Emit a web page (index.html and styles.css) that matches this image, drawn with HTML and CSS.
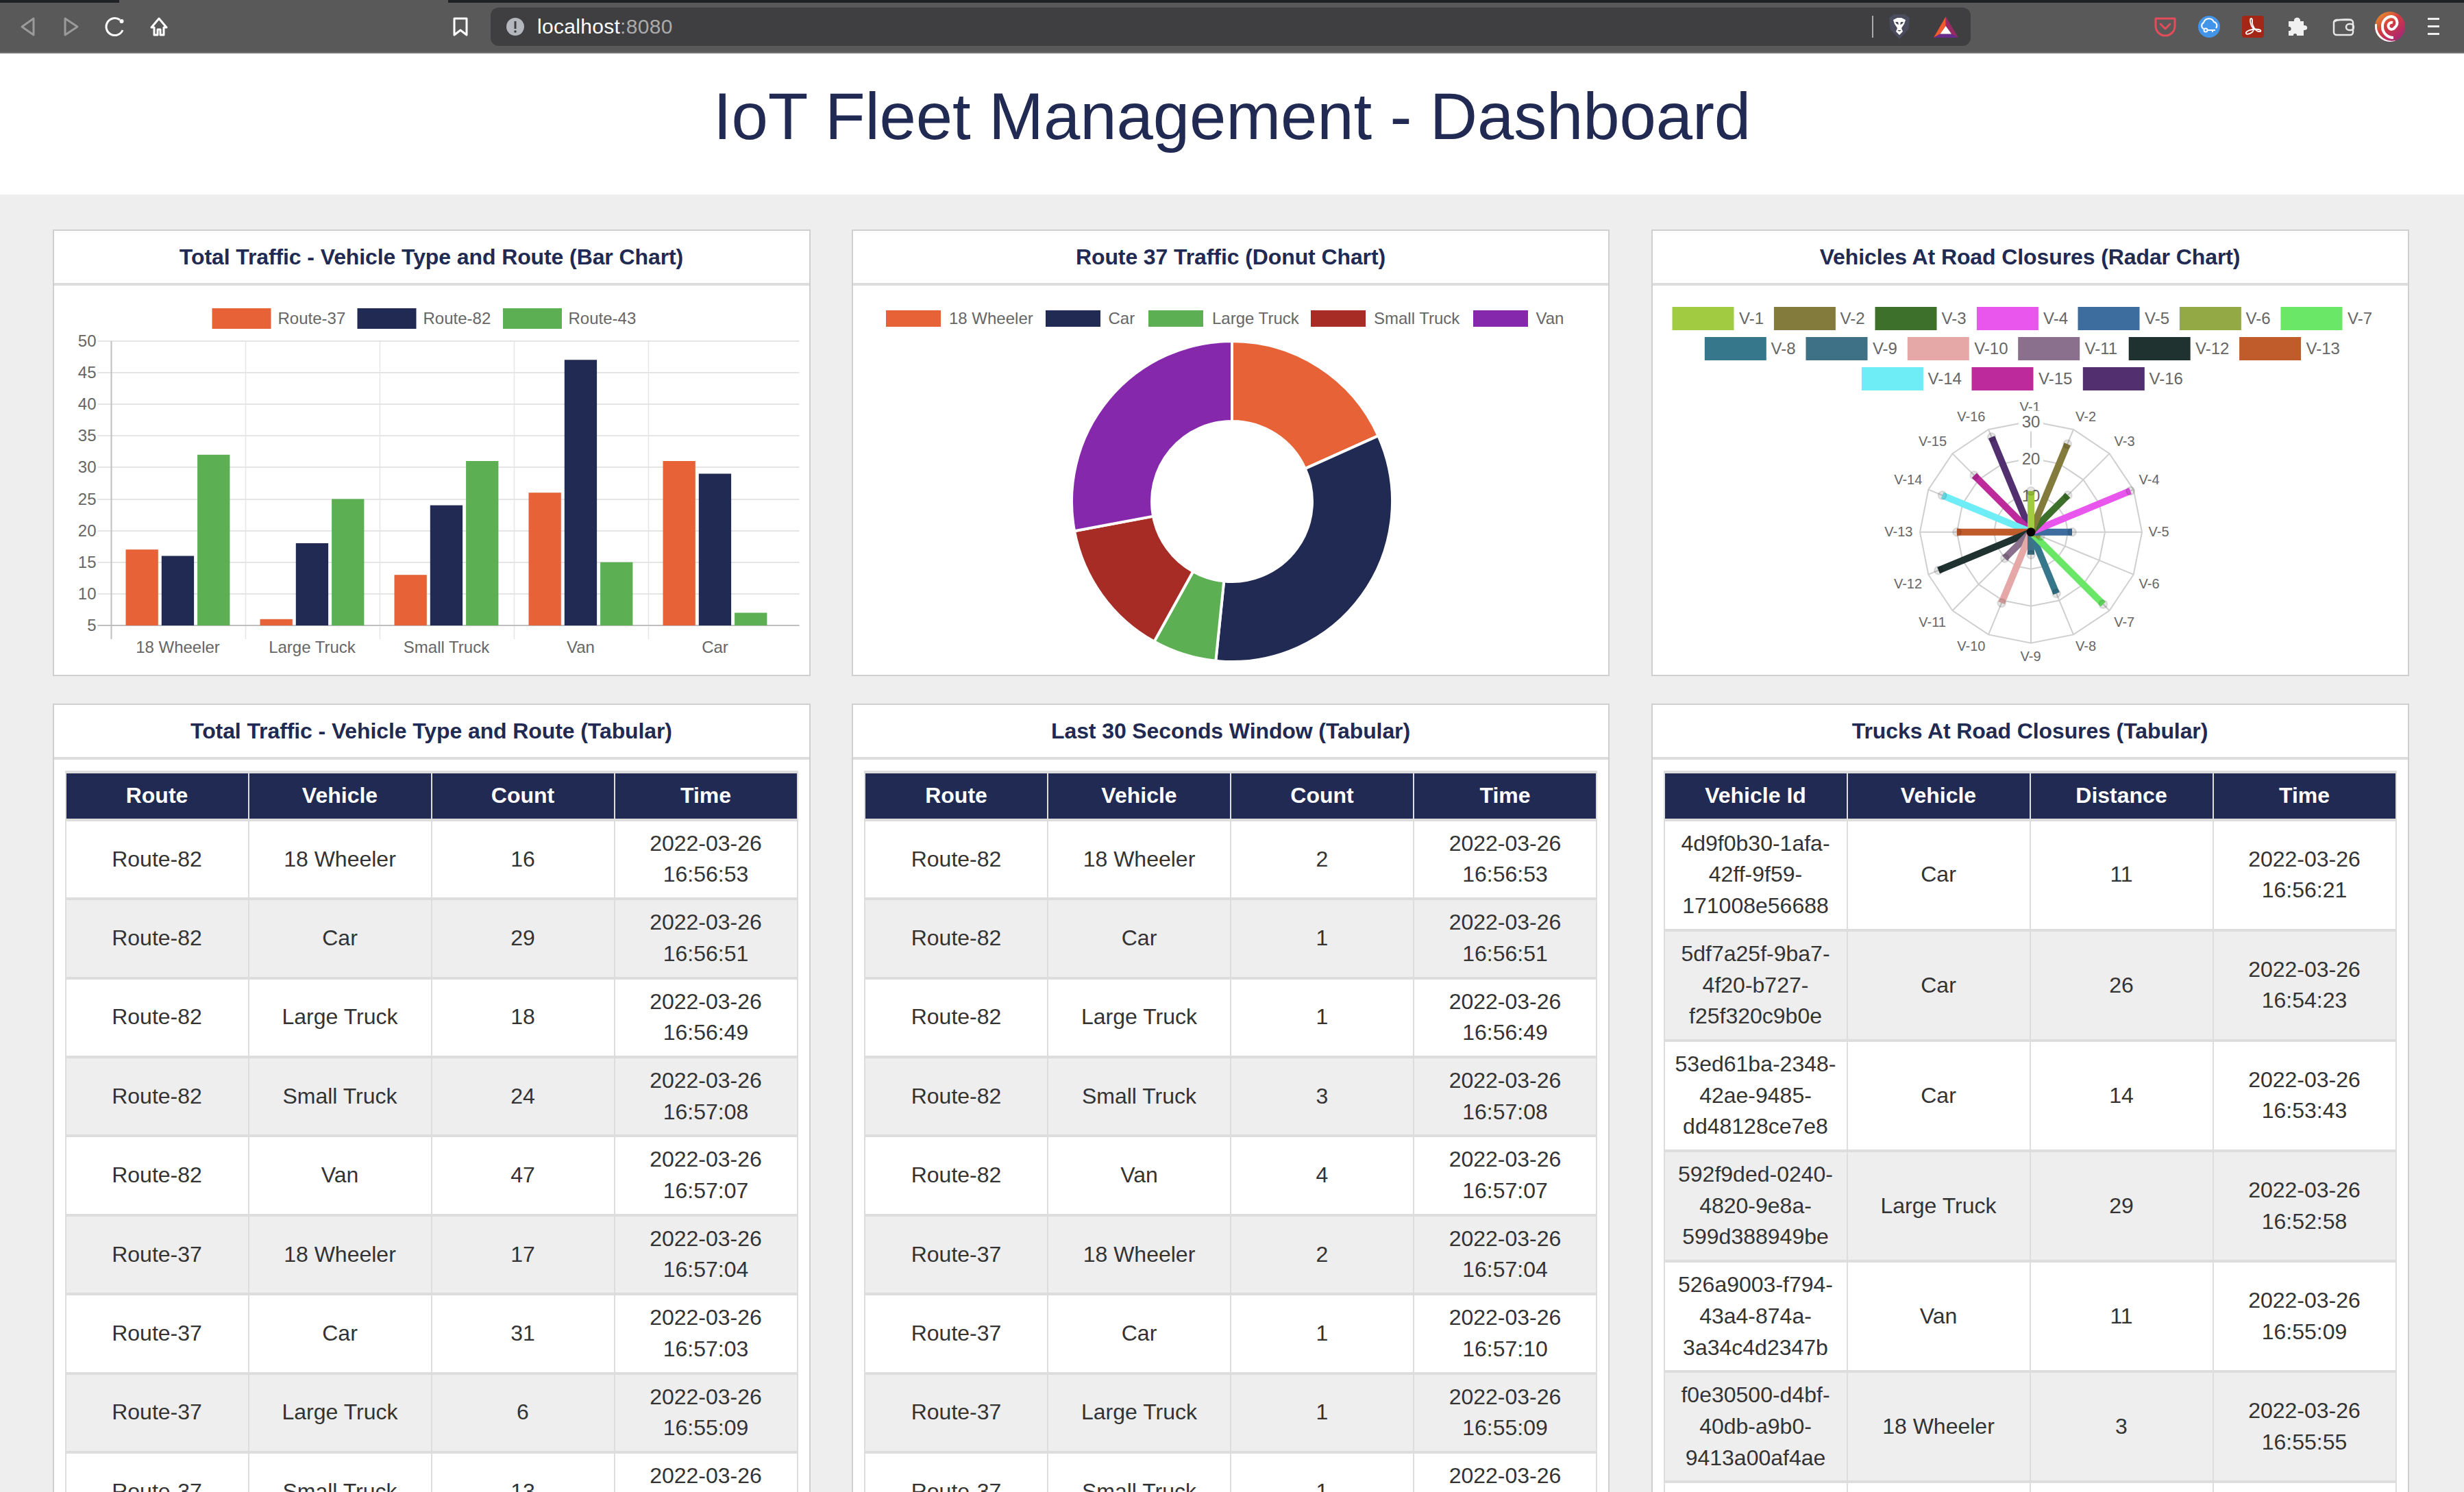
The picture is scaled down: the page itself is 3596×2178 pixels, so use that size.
FILE: index.html
```html
<!DOCTYPE html>
<html lang="en">
<head>
  <meta charset="UTF-8">
  <title>IoT Fleet Management - Dashboard</title>
  <link rel="stylesheet" href="styles.css">
</head>
<body>
  <div class="tabstrip"><span class="tab-active"></span></div>
  <div class="toolbar">
    <svg class="tool" viewBox="0 0 64 64"><path class="ic-off" d="M41 20 24 32 41 44Z"/></svg>
    <svg class="tool" viewBox="0 0 64 64"><path class="ic-off" d="M23 20 41 32 23 44Z"/></svg>
    <svg class="tool" viewBox="0 0 64 64"><path class="ic-on" d="M43 37A12.500 12.500 0 1 1 39 22"/><circle cx="41.500" cy="24" r="3" fill="#fff"/></svg>
    <svg class="tool" viewBox="0 0 64 64"><path class="ic-on" d="M32 20 21 33H25V44H30V36H34V44H39V33H43Z"/></svg>
    <svg class="tool tool-mark" viewBox="0 0 64 64"><path class="ic-on" d="M23 20H41V44L32 37 23 44Z"/></svg>
    <div class="urlbar">
      <svg class="url-info" viewBox="0 0 32 32"><circle cx="16" cy="16" r="13" fill="#b4b8be"/><rect x="14.500" y="8" width="3" height="11" fill="#3f3e41"/><circle cx="16" cy="23" r="1.800" fill="#3f3e41"/></svg>
      <span class="url-text">localhost<span class="url-port">:8080</span></span>
      <span class="url-sep"></span>
      <svg class="url-shield" viewBox="0 0 30 36">
        <path fill="#4b4d5f" d="M7 0H23L30 5 28 22 15 36 2 22 0 5Z"/>
        <path fill="#fff" d="M6 8 12 5H18L24 8 22 14 18 20 20 25 15 30 10 25 12 20 8 14Z"/>
        <path fill="#4b4d5f" d="M9 11H13L14 15 11 14ZM21 11H17L16 15 19 14ZM12 23H18L15 25Z"/>
      </svg>
      <svg class="url-bat" viewBox="0 0 36 31">
        <path fill="#f2592f" d="M17.700 0 0 31 9.500 25.600 17.700 14Z"/>
        <path fill="#9a2a66" d="M17.700 0 36 31 26 25.600 17.700 14Z"/>
        <path fill="#672c8e" d="M0 31H36L26 25.600H9.500Z"/>
        <path fill="#fff" d="M17.700 14 26 25.600H9.500Z"/>
      </svg>
    </div>
    <div class="extensions">
      <svg class="tool" viewBox="0 0 64 64"><path fill="none" stroke="#e34d5b" stroke-width="3" stroke-linejoin="round" stroke-linecap="round" d="M18 20H46V31A14 14 0 0 1 18 31ZM25 28 32 35 39 28"/></svg>
      <svg class="tool" viewBox="0 0 64 64"><circle cx="32" cy="32" r="16" fill="#4295e8"/><path fill="none" stroke="#fff" stroke-width="2" d="M24 35A5 5 0 0 1 24 26 8 8 0 0 1 39 25 5.500 5.500 0 0 1 42 34M30 37H41M37 37V40"/><circle cx="27" cy="37" r="2.500" fill="none" stroke="#fff" stroke-width="2"/></svg>
      <svg class="tool" viewBox="0 0 64 64"><rect x="16" y="16" width="32" height="32" rx="4" fill="#a32616"/><path fill="none" stroke="#fff" stroke-width="1.800" d="M29 20C27 21 28 29 32 34 36 39 24 45 22 42 20 39 31 34 40 36 45 37 44 40 40 39 35 38 30 29 31 23 31 21 30 20 29 20Z"/></svg>
      <svg class="tool" viewBox="0 0 64 64"><path fill="#f0f0f0" d="M20 24H28C27 17 38 17 37 24H42V30C49 29 49 38 42 37V45H32C33 41 26 41 27 45H20V38C25 39 25 31 20 32Z"/></svg>
      <svg class="tool tool-gap" viewBox="0 0 64 64"><g fill="none" stroke="#e8e8e8" stroke-width="2.500"><rect x="18" y="22" width="28" height="22" rx="4"/><path d="M19 25C21 21 40 21 44 22"/><rect x="36" y="28" width="11" height="9" rx="4.500"/></g></svg>
      <svg class="tool tool-gap" viewBox="0 0 64 64">
        <defs>
          <linearGradient id="swirl" x1="0.100" y1="0" x2="0.900" y2="1"><stop offset="0" stop-color="#e89a2e"/><stop offset="0.450" stop-color="#d3393f"/><stop offset="1" stop-color="#9c2482"/></linearGradient>
          <clipPath id="swirl-clip"><circle cx="32" cy="32" r="22"/></clipPath>
        </defs>
        <circle cx="32" cy="32" r="22" fill="url(#swirl)"/>
        <g clip-path="url(#swirl-clip)" fill="none" stroke="#fff">
          <path stroke-width="4" d="M36 26A5 5 0 1 0 39 33 A9 9 0 0 0 34 17 A14 14 0 0 0 21 32 A16 16 0 0 0 37 48"/>
          <path stroke-width="4" d="M11 28A24 24 0 0 0 40 54M10 38A26 26 0 0 0 28 55"/>
        </g>
      </svg>
      <svg class="tool" viewBox="0 0 64 64"><path fill="#eee" d="M23 19H40V22H23ZM23 30H40V33H23ZM23 41H40V44H23Z"/></svg>
    </div>
  </div>

  <header class="page-title"><h1>IoT Fleet Management - Dashboard</h1></header>

  <main class="dashboard">
    <section class="card">
      <h2 class="card-title">Total Traffic - Vehicle Type and Route (Bar Chart)</h2>
      <div class="card-chart">
        <svg class="chart" viewBox="78.500 417 1102 568">
          <rect fill="#e76237" x="309" y="450" width="86" height="30"/><text x="405" y="473">Route-37</text>
          <rect fill="#212a52" x="521" y="450" width="86" height="30"/><text x="617" y="473">Route-82</text>
          <rect fill="#5cb053" x="733.500" y="450" width="86" height="30"/><text x="829" y="473">Route-43</text>
          <path class="grid" d="M142 498H1166M142 544H1166M142 590H1166M142 636H1166M142 682H1166M142 729H1166M142 775H1166M142 821H1166M142 867H1166"/>
          <path class="grid-thin" d="M358 498V933M554 498V933M750 498V933M946 498V933"/>
          <path class="axis" d="M142 913H1166M162 498V933"/>
          <g class="bars-orange">
            <rect x="183" y="802.200" width="47.300" height="110.800"/>
            <rect x="379" y="903.800" width="47.300" height="9.200"/>
            <rect x="575" y="839.200" width="47.300" height="73.800"/>
            <rect x="771" y="719.200" width="47.300" height="193.800"/>
            <rect x="967" y="673" width="47.300" height="240"/>
          </g>
          <g class="bars-navy">
            <rect x="235.300" y="811.500" width="47.300" height="101.500"/>
            <rect x="431.300" y="793" width="47.300" height="120"/>
            <rect x="627.300" y="737.600" width="47.300" height="175.400"/>
            <rect x="823.300" y="525.300" width="47.300" height="387.700"/>
            <rect x="1019.300" y="691.500" width="47.300" height="221.500"/>
          </g>
          <g class="bars-green">
            <rect x="287.600" y="663.800" width="47.300" height="249.200"/>
            <rect x="483.600" y="728.400" width="47.300" height="184.600"/>
            <rect x="679.600" y="673" width="47.300" height="240"/>
            <rect x="875.600" y="820.700" width="47.300" height="92.300"/>
            <rect x="1071.600" y="894.500" width="47.300" height="18.500"/>
          </g>
          <g class="tick-y">
            <text x="140" y="506">50</text><text x="140" y="552">45</text><text x="140" y="598">40</text>
            <text x="140" y="644">35</text><text x="140" y="690">30</text><text x="140" y="737">25</text>
            <text x="140" y="783">20</text><text x="140" y="829">15</text><text x="140" y="875">10</text>
            <text x="140" y="921">5</text>
          </g>
          <g class="tick-x">
            <text x="259" y="953">18 Wheeler</text><text x="455" y="953">Large Truck</text>
            <text x="651" y="953">Small Truck</text><text x="847" y="953">Van</text><text x="1043" y="953">Car</text>
          </g>
        </svg>
      </div>
    </section>

    <section class="card">
      <h2 class="card-title">Route 37 Traffic (Donut Chart)</h2>
      <div class="card-chart">
        <svg class="chart" viewBox="1245 417 1102 568">
          <rect fill="#e76237" x="1293" y="453" width="80" height="24"/><text x="1385" y="473">18 Wheeler</text>
          <rect fill="#212a52" x="1526" y="453" width="80" height="24"/><text x="1617.500" y="473">Car</text>
          <rect fill="#5cb053" x="1676" y="453" width="80" height="24"/><text x="1769" y="473">Large Truck</text>
          <rect fill="#a72c25" x="1913" y="453" width="80" height="24"/><text x="2005" y="473">Small Truck</text>
          <rect fill="#8628ac" x="2150" y="453" width="80" height="24"/><text x="2241.500" y="473">Van</text>
          <g class="slices">
            <path fill="#e76237" d="M1798 498A234 234 0 0 1 2011.500 636.100L1904.700 684.100A117 117 0 0 0 1798 615Z"/>
            <path fill="#212a52" d="M2011.500 636.100A234 234 0 0 1 1774.300 964.800L1786.200 848.400A117 117 0 0 0 1904.700 684.100Z"/>
            <path fill="#5cb053" d="M1774.300 964.800A234 234 0 0 1 1684.400 936.600L1741.200 834.300A117 117 0 0 0 1786.200 848.400Z"/>
            <path fill="#a72c25" d="M1684.400 936.600A234 234 0 0 1 1568 775.200L1683 753.600A117 117 0 0 0 1741.200 834.300Z"/>
            <path fill="#8628ac" d="M1568 775.200A234 234 0 0 1 1798 498L1798 615A117 117 0 0 0 1683 753.600Z"/>
          </g>
        </svg>
      </div>
    </section>

    <section class="card">
      <h2 class="card-title">Vehicles At Road Closures (Radar Chart)</h2>
      <div class="card-chart">
        <svg class="chart" viewBox="2411.500 417 1102 568">
          <rect fill="#a1cb40" x="2440" y="448" width="90" height="34"/><text x="2537.500" y="473">V-1</text>
          <rect fill="#827b3c" x="2588.400" y="448" width="90" height="34"/><text x="2685" y="473">V-2</text>
          <rect fill="#3d702a" x="2736" y="448" width="90" height="34"/><text x="2833" y="473">V-3</text>
          <rect fill="#e956ee" x="2884.400" y="448" width="90" height="34"/><text x="2981.500" y="473">V-4</text>
          <rect fill="#3d6d9e" x="3032" y="448" width="90" height="34"/><text x="3129.500" y="473">V-5</text>
          <rect fill="#93a945" x="3180.400" y="448" width="90" height="34"/><text x="3277" y="473">V-6</text>
          <rect fill="#6ae766" x="3328" y="448" width="90" height="34"/><text x="3425.500" y="473">V-7</text>
          <rect fill="#37778c" x="2487.300" y="492" width="90" height="34"/><text x="2584" y="517">V-8</text>
          <rect fill="#3e7086" x="2635" y="492" width="90" height="34"/><text x="2732.400" y="517">V-9</text>
          <rect fill="#e6a7a7" x="2783.300" y="492" width="90" height="34"/><text x="2880.700" y="517">V-10</text>
          <rect fill="#8b708d" x="2944.700" y="492" width="90" height="34"/><text x="3042" y="517">V-11</text>
          <rect fill="#1f3230" x="3106.200" y="492" width="90" height="34"/><text x="3203.600" y="517">V-12</text>
          <rect fill="#c05b2c" x="3267.600" y="492" width="90" height="34"/><text x="3365" y="517">V-13</text>
          <rect fill="#6fedf6" x="2716.400" y="536" width="90" height="34"/><text x="2813" y="561">V-14</text>
          <rect fill="#bd2a9c" x="2877" y="536" width="90" height="34"/><text x="2974.500" y="561">V-15</text>
          <rect fill="#52306f" x="3039.300" y="536" width="90" height="34"/><text x="3136" y="561">V-16</text>

          <g class="radar-labels">
            <text x="2962" y="601">V-1</text><text x="3043.600" y="615">V-2</text><text x="3100" y="651">V-3</text><text x="3136" y="707">V-4</text>
            <text x="3150" y="783">V-5</text><text x="3136" y="859">V-6</text><text x="3099.700" y="915">V-7</text><text x="3043.600" y="950">V-8</text>
            <text x="2963" y="965">V-9</text><text x="2876.400" y="950">V-10</text><text x="2819.600" y="915">V-11</text><text x="2784" y="859">V-12</text>
            <text x="2770.400" y="783">V-13</text><text x="2784.300" y="707">V-14</text><text x="2820" y="651">V-15</text><text x="2876.400" y="615">V-16</text>
          </g>

          <g transform="translate(2963.500 776.700)">
            <g class="radar-grid">
              <polygon points="0,-162 62,-149.700 114.600,-114.600 149.700,-62 162,0 149.700,62 114.600,114.600 62,149.700 0,162 -62,149.700 -114.600,114.600 -149.700,62 -162,0 -149.700,-62 -114.600,-114.600 -62,-149.700"/>
              <polygon points="0,-108 41.300,-99.800 76.400,-76.400 99.800,-41.300 108,0 99.800,41.300 76.400,76.400 41.300,99.800 0,108 -41.300,99.800 -76.400,76.400 -99.800,41.300 -108,0 -99.800,-41.300 -76.400,-76.400 -41.300,-99.800"/>
              <polygon points="0,-54 20.700,-49.900 38.200,-38.200 49.900,-20.700 54,0 49.900,20.700 38.200,38.200 20.700,49.900 0,54 -20.700,49.900 -38.200,38.200 -49.900,20.700 -54,0 -49.900,-20.700 -38.200,-38.200 -20.700,-49.900"/>
              <path d="M0 -162V162M62 -149.700 -62 149.700M114.600 -114.600 -114.600 114.600M149.700 -62 -149.700 62M162 0H-162M149.700 62 -149.700 -62M114.600 114.600 -114.600 -114.600M62 149.700 -62 -149.700"/>
            </g>
            <g class="radar-ticks">
              <rect x="-18" y="-177" width="36" height="30"/><text x="0" y="-153">30</text>
              <rect x="-18" y="-123" width="36" height="30"/><text x="0" y="-99">20</text>
              <rect x="-18" y="-69" width="36" height="30"/><text x="0" y="-45">10</text>
            </g>
            <g class="spokes">
              <g stroke="#52306f" transform="rotate(337.500)"><line y2="-150"/><circle cy="-150" r="6"/></g>
              <g stroke="#bd2a9c" transform="rotate(315)"><line y2="-117"/><circle cy="-117" r="6"/></g>
              <g stroke="#6fedf6" transform="rotate(292.500)"><line y2="-140"/><circle cy="-140" r="6"/></g>
              <g stroke="#c05b2c" transform="rotate(270)"><line y2="-108"/><circle cy="-108" r="6"/></g>
              <g stroke="#1f3230" transform="rotate(247.500)"><line y2="-146"/><circle cy="-146" r="6"/></g>
              <g stroke="#8b708d" transform="rotate(225)"><line y2="-54"/><circle cy="-54" r="6"/></g>
              <g stroke="#e6a7a7" transform="rotate(202.500)"><line y2="-112"/><circle cy="-112" r="6"/></g>
              <g stroke="#3e7086" transform="rotate(180)"><line y2="-33"/><circle cy="-33" r="6"/></g>
              <g stroke="#37778c" transform="rotate(157.500)"><line y2="-97"/><circle cy="-97" r="6"/></g>
              <g stroke="#6ae766" transform="rotate(135)"><line y2="-149"/><circle cy="-149" r="6"/></g>
              <g stroke="#93a945" transform="rotate(112.500)"><line y2="-15"/><circle cy="-15" r="6"/></g>
              <g stroke="#3d6d9e" transform="rotate(90)"><line y2="-60"/><circle cy="-60" r="6"/></g>
              <g stroke="#e956ee" transform="rotate(67.500)"><line y2="-157"/><circle cy="-157" r="6"/></g>
              <g stroke="#3d702a" transform="rotate(45)"><line y2="-76"/><circle cy="-76" r="6"/></g>
              <g stroke="#827b3c" transform="rotate(22.500)"><line y2="-139"/><circle cy="-139" r="6"/></g>
              <g stroke="#a1cb40"><line y2="-60"/><circle cy="-60" r="6"/></g>
            </g>
            <circle r="6.500" fill="#000"/>
          </g>
        </svg>
      </div>
    </section>

    <section class="card">
      <h2 class="card-title">Total Traffic - Vehicle Type and Route (Tabular)</h2>
      <div class="card-table">
        <table class="data">
          <thead><tr><th>Route</th><th>Vehicle</th><th>Count</th><th>Time</th></tr></thead>
          <tbody>
            <tr><td>Route-82</td><td>18 Wheeler</td><td>16</td><td>2022-03-26<br>16:56:53</td></tr>
            <tr><td>Route-82</td><td>Car</td><td>29</td><td>2022-03-26<br>16:56:51</td></tr>
            <tr><td>Route-82</td><td>Large Truck</td><td>18</td><td>2022-03-26<br>16:56:49</td></tr>
            <tr><td>Route-82</td><td>Small Truck</td><td>24</td><td>2022-03-26<br>16:57:08</td></tr>
            <tr><td>Route-82</td><td>Van</td><td>47</td><td>2022-03-26<br>16:57:07</td></tr>
            <tr><td>Route-37</td><td>18 Wheeler</td><td>17</td><td>2022-03-26<br>16:57:04</td></tr>
            <tr><td>Route-37</td><td>Car</td><td>31</td><td>2022-03-26<br>16:57:03</td></tr>
            <tr><td>Route-37</td><td>Large Truck</td><td>6</td><td>2022-03-26<br>16:55:09</td></tr>
            <tr><td>Route-37</td><td>Small Truck</td><td>13</td><td>2022-03-26<br>&nbsp;</td></tr>
          </tbody>
        </table>
      </div>
    </section>

    <section class="card">
      <h2 class="card-title">Last 30 Seconds Window (Tabular)</h2>
      <div class="card-table">
        <table class="data">
          <thead><tr><th>Route</th><th>Vehicle</th><th>Count</th><th>Time</th></tr></thead>
          <tbody>
            <tr><td>Route-82</td><td>18 Wheeler</td><td>2</td><td>2022-03-26<br>16:56:53</td></tr>
            <tr><td>Route-82</td><td>Car</td><td>1</td><td>2022-03-26<br>16:56:51</td></tr>
            <tr><td>Route-82</td><td>Large Truck</td><td>1</td><td>2022-03-26<br>16:56:49</td></tr>
            <tr><td>Route-82</td><td>Small Truck</td><td>3</td><td>2022-03-26<br>16:57:08</td></tr>
            <tr><td>Route-82</td><td>Van</td><td>4</td><td>2022-03-26<br>16:57:07</td></tr>
            <tr><td>Route-37</td><td>18 Wheeler</td><td>2</td><td>2022-03-26<br>16:57:04</td></tr>
            <tr><td>Route-37</td><td>Car</td><td>1</td><td>2022-03-26<br>16:57:10</td></tr>
            <tr><td>Route-37</td><td>Large Truck</td><td>1</td><td>2022-03-26<br>16:55:09</td></tr>
            <tr><td>Route-37</td><td>Small Truck</td><td>1</td><td>2022-03-26<br>&nbsp;</td></tr>
          </tbody>
        </table>
      </div>
    </section>

    <section class="card">
      <h2 class="card-title">Trucks At Road Closures (Tabular)</h2>
      <div class="card-table">
        <table class="data">
          <thead><tr><th>Vehicle Id</th><th>Vehicle</th><th>Distance</th><th>Time</th></tr></thead>
          <tbody>
            <tr><td>4d9f0b30-1afa-<br>42ff-9f59-<br>171008e56688</td><td>Car</td><td>11</td><td>2022-03-26<br>16:56:21</td></tr>
            <tr><td>5df7a25f-9ba7-<br>4f20-b727-<br>f25f320c9b0e</td><td>Car</td><td>26</td><td>2022-03-26<br>16:54:23</td></tr>
            <tr><td>53ed61ba-2348-<br>42ae-9485-<br>dd48128ce7e8</td><td>Car</td><td>14</td><td>2022-03-26<br>16:53:43</td></tr>
            <tr><td>592f9ded-0240-<br>4820-9e8a-<br>599d388949be</td><td>Large Truck</td><td>29</td><td>2022-03-26<br>16:52:58</td></tr>
            <tr><td>526a9003-f794-<br>43a4-874a-<br>3a34c4d2347b</td><td>Van</td><td>11</td><td>2022-03-26<br>16:55:09</td></tr>
            <tr><td>f0e30500-d4bf-<br>40db-a9b0-<br>9413a00af4ae</td><td>18 Wheeler</td><td>3</td><td>2022-03-26<br>16:55:55</td></tr>
            <tr><td>&nbsp;</td><td></td><td></td><td></td></tr>
          </tbody>
        </table>
      </div>
    </section>
  </main>
</body>
</html>
```

FILE: styles.css
```css
html, body {
  margin: 0;
  height: 100%;
  overflow: hidden;
}
body {
  font-family: "Liberation Sans", Arial, sans-serif;
  background: #eeeeee;
  color: #333;
}

/* browser chrome */
.tabstrip {
  height: 4px;
  background: #202124;
}
.tab-active {
  display: block;
  width: 480px;
  height: 4px;
  margin-left: 174px;
  background: #595959;
}
.toolbar {
  display: flex;
  align-items: center;
  box-sizing: border-box;
  height: 74px;
  padding: 0 12px 2px 8px;
  background: #595959;
  border-bottom: 2px solid #727272;
}
.tool {
  flex: none;
  width: 64px;
  height: 64px;
}
.tool-mark {
  margin-left: 376px;
}
.tool-gap {
  margin-left: 4px;
}
.ic-off {
  fill: none;
  stroke: #9a9a9a;
  stroke-width: 3;
  stroke-linejoin: round;
}
.ic-on {
  fill: none;
  stroke: #fff;
  stroke-width: 3;
  stroke-linejoin: round;
}
.urlbar {
  display: flex;
  align-items: center;
  flex: none;
  box-sizing: border-box;
  width: 2160px;
  height: 56px;
  margin-left: 12px;
  padding: 0 18px 0 20px;
  background: #3f3e41;
  border-radius: 12px;
}
.url-info {
  width: 32px;
  height: 32px;
}
.url-text {
  margin-left: 16px;
  font-size: 30px;
  letter-spacing: 0.3px;
  color: #fff;
}
.url-port {
  color: #aaa;
}
.url-sep {
  width: 2px;
  height: 32px;
  margin-left: auto;
  background: #aaa;
}
.url-shield {
  width: 30px;
  height: 36px;
  margin-left: 23px;
}
.url-bat {
  width: 36px;
  height: 31px;
  margin-left: 35px;
}
.extensions {
  display: flex;
  margin-left: auto;
}

/* page */
.page-title {
  display: flex;
  align-items: center;
  justify-content: center;
  box-sizing: border-box;
  height: 206px;
  padding-bottom: 22px;
  background: #fff;
}
.page-title h1 {
  margin: 0;
  font-size: 96px;
  font-weight: normal;
  letter-spacing: -0.15px;
  color: #212a52;
}
.dashboard {
  display: grid;
  grid-template-columns: repeat(3, 1106px);
  column-gap: 60.5px;
  row-gap: 40px;
  align-items: start;
  padding: 51px 0 0 76.5px;
}
.card {
  background: #fff;
  border: 2px solid #cfcfcf;
}
.card-title {
  box-sizing: border-box;
  height: 80px;
  margin: 0;
  font-size: 32px;
  line-height: 76px;
  letter-spacing: -0.1px;
  text-align: center;
  color: #212a52;
  border-bottom: 4px solid #ddd;
}
.card-chart {
  height: 568px;
}
.card-table {
  padding: 16px 16px 0;
}

/* charts */
.chart {
  display: block;
  width: 1102px;
  height: 568px;
  font-size: 24px;
  fill: #666;
}
.grid {
  fill: none;
  stroke: #e5e5e5;
  stroke-width: 2;
}
.grid-thin {
  fill: none;
  stroke: #e5e5e5;
  stroke-width: 1.500;
}
.axis {
  fill: none;
  stroke: #bfbfbf;
  stroke-width: 2;
}
.bars-orange {
  fill: #e76237;
}
.bars-navy {
  fill: #212a52;
}
.bars-green {
  fill: #5cb053;
}
.tick-y {
  text-anchor: end;
}
.tick-x {
  text-anchor: middle;
}
.slices path {
  stroke: #fff;
  stroke-width: 4;
}
.radar-labels {
  font-size: 20px;
  text-anchor: middle;
}
.radar-grid {
  fill: none;
  stroke: #cfcfcf;
  stroke-width: 2;
}
.radar-ticks {
  text-anchor: middle;
}
.radar-ticks rect {
  fill: #fff;
}
.spokes line {
  stroke-width: 10;
}
.spokes circle {
  fill: rgba(0, 0, 0, 0.1);
  stroke: rgba(0, 0, 0, 0.1);
  stroke-width: 2;
}

/* tables */
.data {
  width: 100%;
  table-layout: fixed;
  border-collapse: collapse;
  font-size: 32px;
  line-height: 45.7px;
  text-align: center;
}
.data th,
.data td {
  padding: 10px;
  border-style: solid;
  border-color: #ddd;
  border-width: 4px 2px;
  vertical-align: middle;
}
.data th {
  background: #212a52;
  color: #fff;
}
.data tbody tr:nth-child(even) {
  background: #eeeeee;
}
```
